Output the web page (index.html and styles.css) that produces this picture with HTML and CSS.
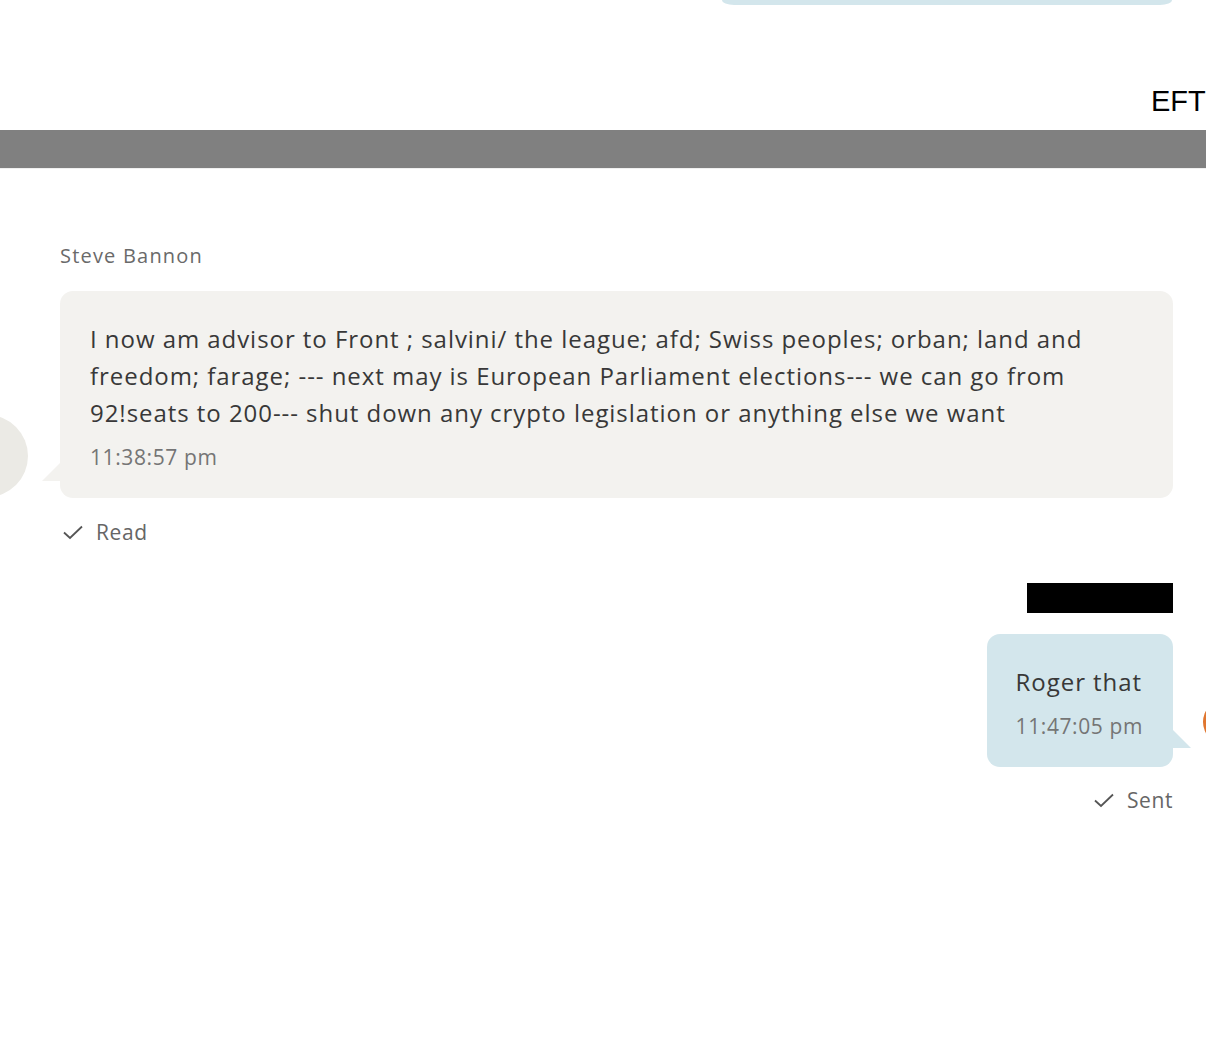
FILE: index.html
```html
<!DOCTYPE html>
<html>
<head>
<meta charset="utf-8">
<link rel="stylesheet" href="styles.css">
</head>
<body>
<div class="top">
  <div class="prev-bubble"></div>
  <div class="eft">EFT</div>
</div>
<div class="bar"></div>
<div class="chat">
  <div class="msg in">
    <div class="sender">Steve Bannon</div>
    <div class="bubble-row">
      <div class="avatar avatar-in"></div>
      <div class="bubble gray">
        <div class="text">I now am advisor to Front ; salvini/ the league; afd; Swiss peoples; orban; land and freedom; farage; --- next may is European Parliament elections--- we can go from 92!seats to 200--- shut down any crypto legislation or anything else we want</div>
        <div class="time">11:38:57 pm</div>
        <div class="tail tail-left"></div>
      </div>
    </div>
    <div class="status"><svg class="check" viewBox="0 0 22 16" width="22" height="16"><path d="M2 8.5 L8 14 L20 2.5" fill="none" stroke="#555" stroke-width="1.8"/></svg>Read</div>
  </div>
  <div class="msg out">
    <div class="redact"></div>
    <div class="bubble-row">
      <div class="bubble blue">
        <div class="text">Roger that</div>
        <div class="time">11:47:05 pm</div>
        <div class="tail tail-right"></div>
      </div>
      <div class="avatar avatar-out"></div>
    </div>
    <div class="status"><svg class="check" viewBox="0 0 22 16" width="22" height="16"><path d="M2 8.5 L8 14 L20 2.5" fill="none" stroke="#555" stroke-width="1.8"/></svg>Sent</div>
  </div>
</div>
</body>
</html>
```
FILE: styles.css
```css
html, body {
  margin: 0;
  padding: 0;
  background: #ffffff;
  overflow: hidden;
}
body {
  width: 1206px;
  height: 1058px;
  font-family: "Open Sans", "Noto Sans", sans-serif;
  color: #3b3b3b;
}
.top {
  height: 130px;
  position: relative;
}
.prev-bubble {
  margin-left: 722px;
  width: 450px;
  height: 5px;
  background: #d3e6ec;
  border-radius: 0 0 12px 12px / 0 0 5px 5px;
}
.eft {
  position: absolute;
  left: 1151px;
  top: 84px;
  font-family: "Liberation Sans", Arial, sans-serif;
  font-size: 29px;
  line-height: 34px;
  color: #000;
  white-space: nowrap;
}
.bar {
  height: 38px;
  background: #808080;
  border-bottom: 1px solid #f0f0f0;
}
.chat {
  padding: 73px 33px 0 60px;
  display: flex;
  flex-direction: column;
}
.sender {
  font-size: 20px;
  line-height: 28px;
  color: #6a6a6a;
  letter-spacing: 1.2px;
  margin-bottom: 21px;
}
.bubble-row {
  position: relative;
  display: flex;
}
.bubble {
  position: relative;
  border-radius: 13px;
}
.gray {
  flex: 1;
  background: #f3f2ef;
  padding: 29px 30px 26px 30px;
}
.blue {
  background: #d3e6ec;
  padding: 29px 30px 26px 29px;
}
.text {
  font-size: 24px;
  line-height: 37px;
  letter-spacing: 0.95px;
  color: #383838;
}
.time {
  font-size: 21px;
  line-height: 30px;
  letter-spacing: 0.6px;
  color: #757575;
  margin-top: 11px;
}
.tail {
  position: absolute;
  width: 0;
  height: 0;
}
.tail-left {
  left: -18px;
  bottom: 17px;
  border-top: 18px solid transparent;
  border-right: 18px solid #f3f2ef;
}
.tail-right {
  right: -18px;
  bottom: 19px;
  border-top: 18px solid transparent;
  border-left: 18px solid #d3e6ec;
}
.avatar {
  position: absolute;
  border-radius: 50%;
}
.avatar-in {
  left: -114px;
  top: 124px;
  width: 82px;
  height: 82px;
  background: #ebeae5;
}
.avatar-out {
  right: -76px;
  top: 65px;
  width: 46px;
  height: 46px;
  background: #e0762f;
}
.status {
  display: flex;
  align-items: center;
  gap: 12px;
  font-size: 21px;
  line-height: 30px;
  letter-spacing: 0.6px;
  color: #666;
  margin-top: 19px;
  padding-left: 2px;
}
.check {
  display: block;
}
.out {
  align-items: flex-end;
  display: flex;
  flex-direction: column;
  margin-top: 36px;
}
.out .status {
  margin-top: 18px;
  padding-left: 0;
}
.redact {
  width: 146px;
  height: 30px;
  background: #000;
  margin-bottom: 21px;
}
```
